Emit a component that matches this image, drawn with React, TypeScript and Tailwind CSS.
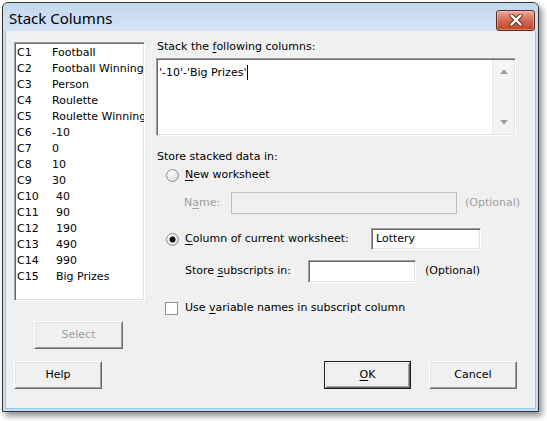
import React from "react";

const font = { fontFamily: "'DejaVu Sans', 'Liberation Sans', sans-serif" };

const items: [string, string][] = [
  ["C1", "Football"],
  ["C2", "Football Winnings"],
  ["C3", "Person"],
  ["C4", "Roulette"],
  ["C5", "Roulette Winnings"],
  ["C6", "-10"],
  ["C7", "0"],
  ["C8", "10"],
  ["C9", "30"],
  ["C10", "40"],
  ["C11", "90"],
  ["C12", "190"],
  ["C13", "490"],
  ["C14", "990"],
  ["C15", "Big Prizes"],
];

const sunken =
  "border border-t-[#a0a0a0] border-l-[#a0a0a0] border-r-white border-b-white shadow-[inset_1px_1px_0_#696969,inset_-1px_-1px_0_#e3e3e3]";

function Radio({ checked }: { checked?: boolean }) {
  return (
    <svg width="13" height="13" viewBox="0 0 13 13" className="shrink-0">
      <defs>
        <radialGradient id={checked ? "rg1" : "rg0"} cx="0.35" cy="0.3" r="0.8">
          <stop offset="0" stopColor="#ffffff" />
          <stop offset="1" stopColor="#d8d8d8" />
        </radialGradient>
      </defs>
      <circle cx="6.5" cy="6.5" r="6" fill={`url(#${checked ? "rg1" : "rg0"})`} stroke="#8f8f8f" strokeWidth="1" />
      {checked && <circle cx="6.5" cy="6.5" r="3" fill="#111" />}
    </svg>
  );
}

function Btn({
  children,
  w,
  disabled,
  def,
}: {
  children: React.ReactNode;
  w: string;
  disabled?: boolean;
  def?: boolean;
}) {
  const inner = (
    <div
      className={`flex h-full w-full items-center justify-center bg-[#f0f0f0] border border-t-white border-l-white border-r-[#696969] border-b-[#696969] shadow-[inset_1px_1px_0_#e3e3e3,inset_-1px_-1px_0_#a0a0a0] text-[11px] ${
        disabled ? "text-[#a0a0a0]" : "text-black"
      }`}
    >
      {children}
    </div>
  );
  if (def)
    return <div className={`${w} h-[28px] border border-[#1c1c1c]`}>{inner}</div>;
  return <div className={`${w} h-[28px]`}>{inner}</div>;
}

export default function App() {
  return (
    <div className="w-[547px] h-[421px] bg-white overflow-hidden" style={font}>
      <div className="ml-[2px] mt-[2px] w-[537px] h-[410px] rounded-t-[6px] border border-[#343434] bg-[#c9dcf0] shadow-[3px_4px_6px_rgba(0,0,0,0.45)] flex flex-col overflow-hidden">
        {/* title bar */}
        <div className="h-[28px] shrink-0 flex items-center justify-between rounded-t-[5px] bg-gradient-to-b from-[#c3d8ee] to-[#d3e3f3] pl-[6px] pr-[3px]">
          <span
            className="text-[15px] text-black leading-none mt-[2px]"
            style={{ fontFamily: "'Noto Sans', 'Open Sans', sans-serif" }}
          >
            Stack Columns
          </span>
          <div className="w-[39px] h-[21px] mt-[6px] rounded-[3px] border border-[#5a2a22] bg-gradient-to-b from-[#e8a797] via-[#d46a55] to-[#c1401f] flex items-center justify-center shadow-[inset_0_0_0_1px_rgba(255,255,255,0.35)]">
            <svg width="14" height="12" viewBox="0 0 14 12">
              <path d="M2.5 1.5 L11.5 10.5 M11.5 1.5 L2.5 10.5" stroke="#5b2a20" strokeWidth="4" strokeLinecap="round" />
              <path d="M2.5 1.5 L11.5 10.5 M11.5 1.5 L2.5 10.5" stroke="#ffffff" strokeWidth="2.4" strokeLinecap="round" />
            </svg>
          </div>
        </div>
        {/* body */}
        <div className="flex-1 mx-[2px] mb-[2px] bg-[#f0f0f0] border border-t-0 border-[#8ccdf0] flex flex-col text-[11px] text-black">
          <div className="flex">
            {/* left column */}
            <div className="flex flex-col pl-[8px] pt-[11px] w-[150px] shrink-0">
              <div className={`w-[131px] h-[259px] bg-white ${sunken} pt-[2px] pl-[2px] overflow-hidden`}>
                {items.map(([c, n], i) => (
                  <div key={c} className="flex h-[16px] items-center whitespace-nowrap">
                    <span className={`${i >= 9 ? "w-[39px]" : "w-[35px]"} shrink-0`}>{c}</span>
                    <span>{n}</span>
                  </div>
                ))}
              </div>
              <div className="mt-[20px] ml-[20px]">
                <Btn w="w-[89px]" disabled>
                  Select
                </Btn>
              </div>
            </div>
            {/* right column */}
            <div className="flex flex-col pt-[8px] w-[378px]">
              <div className="h-[16px] flex items-center pl-[1px] whitespace-pre">
                <span>Stack the </span>
                <span className="underline underline-offset-2">f</span>
                <span>ollowing columns:</span>
              </div>
              <div className={`mt-[3px] w-[360px] h-[78px] bg-white ${sunken} flex`}>
                <div className="flex-1 pl-[2px] pt-[7px] h-[16px] flex items-start">
                  <span className="leading-[14px]">'-10'-'Big Prizes'</span>
                  <span className="inline-block w-[1px] h-[15px] bg-black ml-[1px] -mt-[1px]" />
                </div>
                <div className="w-[22px] mt-[1px] mb-[1px] mr-[1px] bg-[#f4f4f4] border-l border-[#e6e6e6] flex flex-col items-center justify-between py-[9px]">
                  <svg width="8" height="5" viewBox="0 0 8 5">
                    <path d="M0 5 L4 0.5 L8 5 Z" fill="#9a9a9a" />
                  </svg>
                  <svg width="8" height="5" viewBox="0 0 8 5">
                    <path d="M0 0 L4 4.5 L8 0 Z" fill="#9a9a9a" />
                  </svg>
                </div>
              </div>
              <div className="mt-[13px] h-[16px] flex items-center pl-[1px]">Store stacked data in:</div>
              <div className="mt-[2px] h-[16px] flex items-center pl-[10px]">
                <Radio />
                <span className="ml-[6px]">
                  <span className="underline underline-offset-2">N</span>ew worksheet
                </span>
              </div>
              <div className="mt-[9px] h-[22px] flex items-center pl-[28px] text-[#a0a0a0]">
                <span className="w-[47px] shrink-0">
                  N<span className="underline underline-offset-2">a</span>me:
                </span>
                <div className="w-[226px] h-[22px] bg-[#f0f0f0] border border-[#c0c0c0] shrink-0" />
                <span className="ml-[8px]">(Optional)</span>
              </div>
              <div className="mt-[14px] h-[22px] flex items-center pl-[10px]">
                <Radio checked />
                <span className="ml-[6px] w-[186px] shrink-0">
                  <span className="underline underline-offset-2">C</span>olumn of current worksheet:
                </span>
                <div className={`w-[110px] h-[22px] bg-white ${sunken} flex items-center pl-[4px]`}>Lottery</div>
              </div>
              <div className="mt-[10px] h-[23px] flex items-center pl-[29px]">
                <span className="w-[123px] shrink-0">
                  Store <span className="underline underline-offset-2">s</span>ubscripts in:
                </span>
                <div className={`w-[108px] h-[23px] bg-white ${sunken} shrink-0`} />
                <span className="ml-[9px]">(Optional)</span>
              </div>
              <div className="mt-[17px] h-[16px] flex items-center pl-[9px]">
                <div className="w-[13px] h-[13px] bg-white border border-[#8f8f8f] shrink-0" />
                <span className="ml-[7px]">
                  Use <span className="underline underline-offset-2">v</span>ariable names in subscript column
                </span>
              </div>
            </div>
          </div>
          {/* bottom buttons */}
          <div className="mt-[12px] flex pl-[8px]">
            <Btn w="w-[88px]">Help</Btn>
            <div className="ml-[222px]">
              <Btn w="w-[87px]" def>
                <span>
                  <span className="underline underline-offset-2">O</span>K
                </span>
              </Btn>
            </div>
            <div className="ml-[18px]">
              <Btn w="w-[88px]">Cancel</Btn>
            </div>
          </div>
        </div>
      </div>
    </div>
  );
}
